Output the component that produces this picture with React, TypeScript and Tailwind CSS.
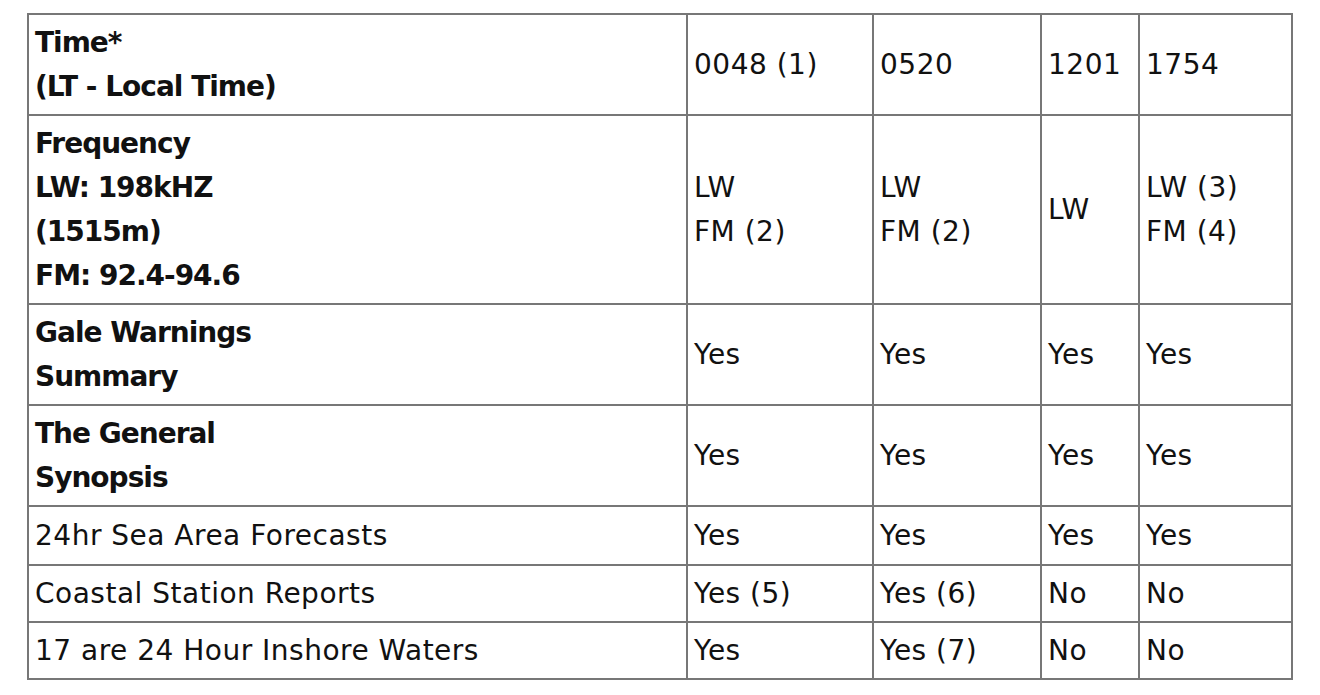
const cols = ['w-[659px]', 'w-[186px]', 'w-[168px]', 'w-[98px]', 'w-[153px]'];

type Row = {
  label: string[];
  bold?: boolean;
  cells: string[][];
  h: string;
};

const rows: Row[] = [
  { label: ['Time*', '(LT - Local Time)'], bold: true, cells: [['0048 (1)'], ['0520'], ['1201'], ['1754']], h: 'h-[101px]' },
  {
    label: ['Frequency', 'LW: 198kHZ', '(1515m)', 'FM: 92.4-94.6'],
    bold: true,
    cells: [['LW', 'FM (2)'], ['LW', 'FM (2)'], ['LW'], ['LW (3)', 'FM (4)']],
    h: 'h-[189px]',
  },
  { label: ['Gale Warnings', 'Summary'], bold: true, cells: [['Yes'], ['Yes'], ['Yes'], ['Yes']], h: 'h-[101px]' },
  { label: ['The General', 'Synopsis'], bold: true, cells: [['Yes'], ['Yes'], ['Yes'], ['Yes']], h: 'h-[101px]' },
  { label: ['24hr Sea Area Forecasts'], cells: [['Yes'], ['Yes'], ['Yes'], ['Yes']], h: 'h-[59px]' },
  { label: ['Coastal Station Reports'], cells: [['Yes (5)'], ['Yes (6)'], ['No'], ['No']], h: 'h-[57px]' },
  { label: ['17 are 24 Hour Inshore Waters'], cells: [['Yes'], ['Yes (7)'], ['No'], ['No']], h: 'h-[57px]' },
];

export default function App() {
  return (
    <div className="min-h-screen bg-white pl-[27px] pt-[13px] font-['DejaVu_Sans',sans-serif] text-[#111]">
      <table className="border-collapse text-[28px] leading-[44px]">
        <tbody>
          {rows.map((row, i) => (
            <tr key={i} className={row.h}>
              <td
                className={`${cols[0]} border-2 border-[#777] px-[6px] align-middle ${
                  row.bold ? 'font-bold tracking-[-1px]' : 'tracking-[0.5px]'
                }`}
              >
                {row.label.map((l) => (
                  <div key={l}>{l}</div>
                ))}
              </td>
              {row.cells.map((c, j) => (
                <td key={j} className={`${cols[j + 1]} border-2 border-[#777] px-[6px] align-middle tracking-[0.5px]`}>
                  {c.map((t) => (
                    <div key={t}>{t}</div>
                  ))}
                </td>
              ))}
            </tr>
          ))}
        </tbody>
      </table>
    </div>
  );
}
